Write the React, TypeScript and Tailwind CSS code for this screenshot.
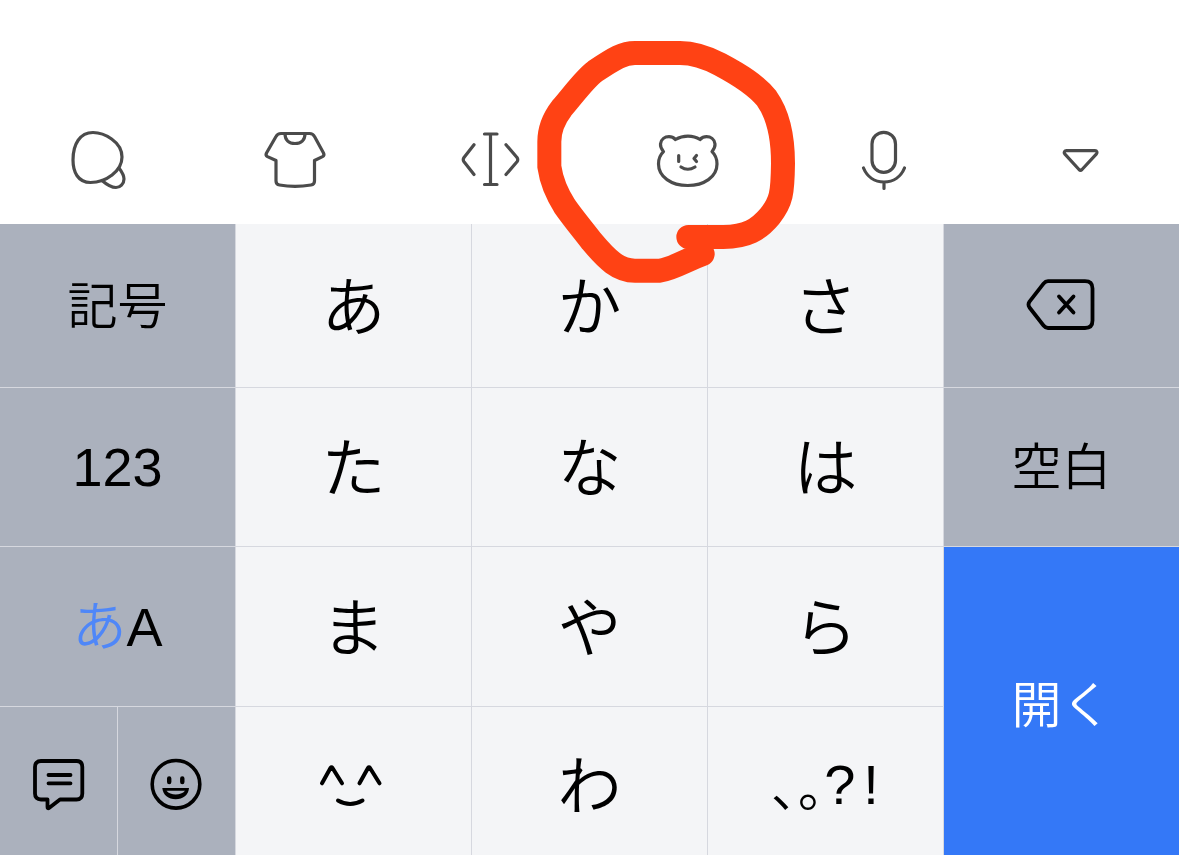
import React from "react";

type KeyProps = {
  label?: string;
  className?: string;
  children: React.ReactNode;
};

const Key = ({ label, className = "bg-[#f4f5f7] pb-2 text-[64px]", children }: KeyProps) => (
  <button
    type="button"
    aria-label={label}
    className={`flex items-center justify-center leading-none ${className}`}
  >
    {children}
  </button>
);

const tools = [
  {
    label: "Search",
    icon: (
      <>
        <path d="M27 4.500C38 4.500 56 13.500 56 29C56 43 40 54.500 24.500 54.500C12 54.500 7 44 7 32C7 16 14 4.500 27 4.500Z" />
        <path d="M53 40C56 44 58 48 58 51C58 56 54 59.500 50 59.500C45 59.500 40 56 36 52.500" />
      </>
    ),
  },
  {
    label: "Themes",
    icon: (
      <>
        <path d="M18 5.500H46.500C49 5.500 50.500 6.500 51.500 8.500L60.500 25C61.300 26.600 61 27.800 59.500 28.600L51.500 32.500V53C51.500 55.500 50.500 56.600 48 57C38 58.800 26 58.800 16.500 57C14 56.600 13 55.500 13 53V32.500L4.500 28.600C3 27.800 2.700 26.600 3.500 25L13 8.500C14 6.500 15.500 5.500 18 5.500Z" />
        <path d="M22 6C22 12 26 15.500 32 15.500S42 12 42 6" />
      </>
    ),
  },
  {
    label: "Cursor",
    icon: (
      <>
        <path d="M25.500 6H38M31.500 6V56.500M25.500 56.500H38" />
        <path d="M15 16.700L5 29.500Q3.500 31.700 5 33.800L15 46.500M47 16.700L58 29.500Q59.500 31.700 58 33.800L47 46.500" />
      </>
    ),
  },
  {
    label: "Stickers",
    icon: (
      <>
        <path d="M7.500 23.700C5 20.500 4.300 18 4.500 16C5 11 9 8.700 13 8.700C15.500 8.700 17.500 9.500 19.500 11.500C27 7 37 7 44 11.500C46 9.500 48 8.700 50.500 8.700C54.500 8.700 58.500 11 59 16C59.200 18 58.500 20.500 56 23.700C59.500 27 61 31 61 36C61 49 48 57.500 31.700 57.500S2.500 49 2.500 36C2.500 31 4 27 7.500 23.700Z" />
        <path d="M22.700 27.500V33.500M40.500 27.500L38 30.500L40.500 33.500M25 39Q31.700 43.500 39 39" />
      </>
    ),
  },
  {
    label: "Voice input",
    icon: (
      <>
        <rect x="20" y="4.300" width="23.500" height="40" rx="11.700" />
        <path d="M11.500 40C15 48.500 22.500 54 32 54S49 48.500 52.500 40M32 54V60.500" />
      </>
    ),
  },
  {
    label: "Hide keyboard",
    icon: (
      <path d="M17.500 22.700H46C48 22.700 48.500 24.500 47.500 25.800L33 41.500Q31.500 43 30 41.500L15.700 25.800C14.500 24.500 15.500 22.700 17.500 22.700Z" />
    ),
  },
];

const side = "bg-[#abb1bd] pb-2 text-[50px]";

export default function App() {
  return (
    <main className="relative bg-white text-black font-[350] select-none overflow-hidden font-['Noto_Sans_CJK_JP',sans-serif]">
      <nav className="grid grid-cols-6 pt-24">
        {tools.map((tool) => (
          <button
            key={tool.label}
            type="button"
            aria-label={tool.label}
            className="flex h-32 items-center justify-center text-[#4b4b4b]"
          >
            <svg
              viewBox="0 0 64 64"
              className="size-16"
              fill="none"
              stroke="currentColor"
              strokeWidth="3.2"
              strokeLinecap="round"
              strokeLinejoin="round"
            >
              {tool.icon}
            </svg>
          </button>
        ))}
      </nav>

      <div className="grid grid-cols-5 grid-rows-[163px_158px_159px_148px] gap-px bg-[#d6d8df]">
        <Key className={side}>記号</Key>
        <Key>あ</Key>
        <Key>か</Key>
        <Key>さ</Key>
        <Key label="Delete" className="bg-[#abb1bd]">
          <svg
            viewBox="0 0 72 56"
            className="h-14 w-18"
            fill="none"
            stroke="currentColor"
            strokeWidth="3.8"
            strokeLinecap="round"
            strokeLinejoin="round"
          >
            <path d="M22 3.200H59Q66.500 3.200 66.500 10.500V42.500Q66.500 50 59 50H22Q19.500 50 17.500 47.500L3.500 29.500Q1.500 26.600 3.500 23.700L17.500 5.700Q19.500 3.200 22 3.200Z" />
            <path d="M33 18.500L47.500 34.500M47.500 18.500L33 34.500" />
          </svg>
        </Key>

        <Key className="bg-[#abb1bd] font-['Liberation_Sans',sans-serif] text-[54px]">123</Key>
        <Key>た</Key>
        <Key>な</Key>
        <Key>は</Key>
        <Key className={side}>空白</Key>

        <Key className="bg-[#abb1bd]">
          <span className="pb-2 text-[54px] text-[#4f87f8]">あ</span>
          <span className="font-['Liberation_Sans',sans-serif] text-[54px]">A</span>
        </Key>
        <Key>ま</Key>
        <Key>や</Key>
        <Key>ら</Key>
        <Key className="row-span-2 bg-[#3478f7] text-[50px] text-white">開く</Key>

        <div className="grid grid-cols-2 gap-px">
          <Key label="Phrases" className="bg-[#abb1bd] pt-2">
            <svg
              viewBox="0 0 56 56"
              className="size-14"
              fill="none"
              stroke="currentColor"
              strokeWidth="3.8"
              strokeLinecap="round"
              strokeLinejoin="round"
            >
              <path d="M10 4H45.500Q51.300 4 51.300 10V36.500Q51.300 42.500 45.500 42.500H29L18 51Q16.500 51.800 16.500 50V42.500H10Q4 42.500 4 36.500V10Q4 4 10 4Z" />
              <path d="M17.500 18H39.500M17.500 26.300H39.500" />
            </svg>
          </Key>
          <Key label="Emoji" className="bg-[#abb1bd] pt-2">
            <svg viewBox="0 0 56 56" className="size-14" fill="none" stroke="currentColor">
              <circle cx="27" cy="27.300" r="23.800" strokeWidth="3.600" />
              <path d="M20.200 21.500V25M33.300 21.500V25" strokeWidth="4.400" strokeLinecap="round" />
              <path
                d="M13.300 31H40C39.500 38 34 42.300 26.700 42.300S14 38 13.300 31ZM17.500 33.800C19.500 36.500 23 37.500 26.700 37.500S34 36.500 36 33.800Z"
                fill="currentColor"
                fillRule="evenodd"
                stroke="none"
              />
            </svg>
          </Key>
        </div>
        <Key label="Kaomoji" className="bg-[#f4f5f7] pt-2">
          <svg
            viewBox="0 0 72 56"
            className="h-14 w-18"
            fill="none"
            stroke="currentColor"
            strokeWidth="4"
            strokeLinecap="round"
            strokeLinejoin="round"
          >
            <path d="M4 26.300L12.500 11Q13.500 9.700 14.500 11L24 26.300M41.500 26.300L50 11Q51 9.700 52 11L61.500 26.300" />
            <path d="M20 43.500Q32 50.500 44.500 43.500" />
          </svg>
        </Key>
        <Key className="bg-[#f4f5f7] text-[64px]">わ</Key>
        <Key className="bg-[#f4f5f7] pt-2">
          <span className="text-[52px]">､｡</span>
          <span className="flex gap-2 font-['Liberation_Sans',sans-serif] text-[56px]">
            <span>?</span>
            <span>!</span>
          </span>
        </Key>
      </div>

      {/* hand-drawn marker around the sticker button */}
      <svg
        viewBox="0 0 870 810"
        className="pointer-events-none absolute left-[520px] top-[30px] w-[290px]"
        fill="none"
        stroke="#ff4214"
        strokeWidth="72"
        strokeLinecap="round"
        strokeLinejoin="round"
      >
        <path d="M505 621H610C680 620 715 600 750 558C784 515 788 490 789 400C789 310 772 250 740 205C708 165 660 135 600 103C550 77 510 69 480 69H345C310 69 285 84 225 124C195 146 170 182 125 235C98 270 88 300 88 335V410C94 452 108 488 135 530C160 566 185 595 215 634C262 690 295 722 345 722H420C455 718 500 690 548 672" />
      </svg>
    </main>
  );
}
